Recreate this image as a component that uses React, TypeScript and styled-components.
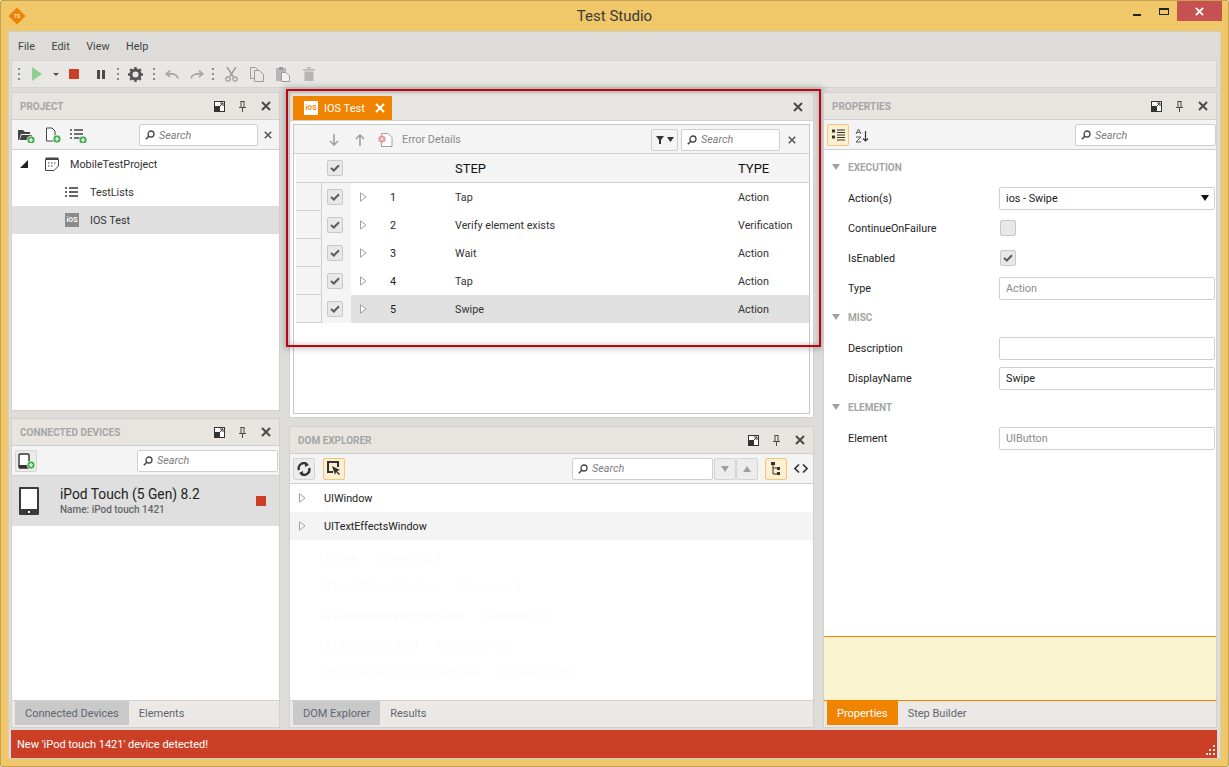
import * as React from "react"
import styled, { createGlobalStyle } from "styled-components"

const GlobalStyle = createGlobalStyle`
  html, body {
    margin: 0;
    padding: 0;
    background: #ffffff;
    overflow: hidden;
  }
  * {
    box-sizing: border-box;
  }
  body {
    font-family: Roboto, "Noto Sans", sans-serif;
    font-size: 10.8px;
    color: #222;
  }
`

/* ---------- small drawings ---------- */

const Dots = () => (
  <svg width="4" height="14" viewBox="0 0 4 14">
    <rect x="1" y="1" width="2" height="2" fill="#8a8a8a" />
    <rect x="1" y="6" width="2" height="2" fill="#8a8a8a" />
    <rect x="1" y="11" width="2" height="2" fill="#8a8a8a" />
  </svg>
)

const CloseX = ({ size = 10, color = "#4a4a4a", weight = 2 }: { size?: number; color?: string; weight?: number }) => (
  <svg width={size} height={size} viewBox="0 0 10 10">
    <path d="M1 1 L9 9 M9 1 L1 9" stroke={color} strokeWidth={weight} fill="none" />
  </svg>
)

const DockSvg = styled.svg`
  margin-right: -1px;
  margin-left: 1px;
`

const DockIcon = () => (
  <DockSvg width="11" height="11" viewBox="0 0 11 11">
    <rect x="0.5" y="0.5" width="10" height="10" fill="#fff" stroke="#333" />
    <rect x="1" y="5" width="5" height="5" fill="#333" />
    <path d="M5 6 L9 2 M6 2 H9 V5" stroke="#333" fill="none" />
  </DockSvg>
)

const PinIcon = () => (
  <svg width="9" height="11" viewBox="0 0 9 11">
    <path d="M2.5 0.5 H6.5 M3 0.5 V6 M6 0.5 V6 M1 6.5 H8 M4.5 6.5 V11" stroke="#4a4a4a" fill="none" />
  </svg>
)

const SearchGlass = () => (
  <svg width="10" height="10" viewBox="0 0 10 10">
    <circle cx="6" cy="4" r="3" stroke="#444" strokeWidth="1.3" fill="none" />
    <path d="M3.8 6.2 L0.8 9.2" stroke="#444" strokeWidth="1.5" />
  </svg>
)

const Check = ({ color = "#5c5c5c" }: { color?: string }) => (
  <svg width="10" height="8" viewBox="0 0 10 8">
    <path d="M1 4 L3.8 6.5 L9 1.2" stroke={color} strokeWidth="2" fill="none" />
  </svg>
)

const Disclosure = () => (
  <svg width="7" height="10" viewBox="0 0 7 10">
    <path d="M0.5 0.8 L6 5 L0.5 9.2 Z" fill="#fff" stroke="#a0a0a0" />
  </svg>
)

const DownGroup = () => (
  <svg width="8" height="6" viewBox="0 0 8 6">
    <path d="M0 0 H8 L4 6 Z" fill="#a0a0a0" />
  </svg>
)

const GreenPlus = () => (
  <g>
    <circle cx="13" cy="12" r="4" fill="#3fae4a" stroke="#fff" strokeWidth="0.6" />
    <path d="M13 10 V14 M11 12 H15" stroke="#fff" strokeWidth="1.2" />
  </g>
)

const BadgeBox = styled.span<{ $bg: string; $fg: string; $size: number }>`
  display: inline-flex;
  align-items: center;
  justify-content: center;
  width: ${(p) => p.$size}px;
  height: ${(p) => p.$size}px;
  background: ${(p) => p.$bg};
  color: ${(p) => p.$fg};
  font-size: 7px;
  font-weight: 700;
  flex: none;
`

const IosBadge = ({ $bg = "#8a8a8a", $fg = "#fff", size = 14 }: { $bg?: string; $fg?: string; size?: number }) => (
  <BadgeBox $bg={$bg} $fg={$fg} $size={size}>iOS</BadgeBox>
)

/* ---------- window chrome ---------- */

const Frame = styled.div`
  width: 1229px;
  height: 767px;
  background: #f0c769;
  border: 1px solid #c4a252;
  border-radius: 2px;
  display: flex;
  flex-direction: column;
  padding: 0 7px 7px;
`

const TitleBar = styled.div`
  height: 30px;
  flex: none;
  display: flex;
  align-items: center;
  position: relative;
`

const Logo = styled.span`
  margin-left: 3px;
  width: 12px;
  height: 12px;
  background: #ee8208;
  transform: rotate(45deg);
  display: inline-flex;
  align-items: center;
  justify-content: center;
  flex: none;
  margin-top: -1px;
`

const LogoText = styled.span`
  transform: rotate(-45deg);
  color: #ffe9c4;
  font-size: 5px;
  font-weight: 700;
`

const Title = styled.div`
  position: absolute;
  left: 0;
  right: 0;
  top: 6px;
  text-align: center;
  font-size: 15px;
  color: #3a3a3a;
`

const WindowButtons = styled.div`
  position: absolute;
  right: -1px;
  top: 0;
  display: flex;
  align-items: flex-start;
`

const MinButton = styled.span`
  width: 8px;
  height: 2px;
  background: #222;
  margin: 13px 18px 0 0;
`

const MaxButton = styled.span`
  width: 10px;
  height: 7px;
  border: 1px solid #222;
  border-top-width: 2px;
  margin: 7px 8px 0 0;
`

const CloseButton = styled.span`
  width: 45px;
  height: 20px;
  background: #c75050;
  display: flex;
  align-items: center;
  justify-content: center;
`

const Body = styled.div`
  flex: 1;
  min-height: 0;
  background: #dddcd8;
  border: 1px solid #cfcecb;
  display: flex;
  flex-direction: column;
`

const MenuBar = styled.div`
  height: 28px;
  flex: none;
  display: flex;
  align-items: center;
  padding-left: 9px;
  gap: 16.5px;
  color: #444;
`

const MainToolbar = styled.div`
  height: 28px;
  flex: none;
  margin: 0 3px 0 2px;
  background: #e8e7e3;
  border: 1px solid #d4d3cf;
  display: flex;
  align-items: center;
  padding-left: 5px;
`

const ToolSlot = styled.span<{ $w: number }>`
  width: ${(p) => p.$w}px;
  display: flex;
  align-items: center;
  justify-content: center;
  flex: none;
`

const Workspace = styled.div`
  flex: 1;
  min-height: 0;
  display: flex;
  gap: 9px;
  padding: 4px 0 2px 2px;
`

const Column = styled.div<{ $w: number }>`
  width: ${(p) => p.$w}px;
  flex: none;
  display: flex;
  flex-direction: column;
  position: relative;
`

const Panel = styled.section<{ $h?: number; $gap?: number }>`
  ${(p) => (p.$h ? `height: ${p.$h}px; flex: none;` : "flex: 1; min-height: 0;")}
  margin-top: ${(p) => p.$gap ?? 0}px;
  background: #fff;
  border: 1px solid #d2d1cd;
  display: flex;
  flex-direction: column;
`

const PanelHeader = styled.header`
  height: 27px;
  flex: none;
  background: #e8e5e1;
  border-bottom: 1px solid #d0d0d0;
  display: flex;
  align-items: center;
  padding: 0 8px 0 8px;
`

const PanelTitle = styled.span`
  flex: 1;
  font-size: 10px;
  font-weight: 700;
  color: #a5a5a5;
  text-transform: uppercase;
`

const HeaderIcons = styled.span`
  display: flex;
  align-items: center;
  gap: 14px;
`

const Strip = styled.div<{ $h?: number; $nudge?: boolean }>`
  height: ${(p) => p.$h ?? 29}px;
  flex: none;
  background: #f4f4f4;
  border-bottom: 1px solid #d0d0d0;
  display: flex;
  align-items: center;
  padding-top: ${(p) => (p.$nudge ? 1 : 0)}px;
`

const SearchBox = styled.div<{ $w: number }>`
  width: ${(p) => p.$w}px;
  height: 22px;
  flex: none;
  background: #fff;
  border: 1px solid #cfcfcf;
  border-radius: 2px;
  display: flex;
  align-items: center;
  gap: 4px;
  padding-left: 5px;
  font-style: italic;
  font-size: 10.8px;
  color: #7d7d7d;
`

const IconButton = styled.span<{ $active?: boolean; $w?: number; $outlined?: boolean }>`
  width: ${(p) => p.$w ?? 22}px;
  height: 22px;
  flex: none;
  display: inline-flex;
  align-items: center;
  justify-content: center;
  border-radius: 2px;
  background: ${(p) => (p.$active ? "#fdf0d0" : p.$outlined ? "#f4f4f4" : "#ececec")};
  border: 1px solid ${(p) => (p.$active ? "#f3c67a" : p.$outlined ? "#cfcfcf" : "#d4d4d4")};
`

const TabBar = styled.div<{ $accent?: boolean }>`
  height: 28px;
  flex: none;
  background: #ebe8e5;
  border-top: 1px solid ${(p) => (p.$accent ? "#f08300" : "#d0d0d0")};
  display: flex;
  align-items: flex-start;
  padding: 0 3px;
  margin: 0 -1px -1px;
  border-left: 1px solid #d2d1cd;
  border-right: 1px solid #d2d1cd;
  border-bottom: 1px solid #d2d1cd;
`

const Tab = styled.span<{ $state?: "on" | "orange" }>`
  height: 24px;
  display: flex;
  align-items: center;
  padding: 0 10px;
  font-size: 11px;
  color: ${(p) => (p.$state === "orange" ? "#fff" : "#5f6670")};
  background: ${(p) => (p.$state === "on" ? "#c9c9c9" : p.$state === "orange" ? "#f08300" : "transparent")};
`

/* ---------- project tree ---------- */

const TreeRow = styled.div<{ $selected?: boolean; $indent: number }>`
  height: 28px;
  flex: none;
  display: flex;
  align-items: center;
  padding-left: ${(p) => p.$indent}px;
  background: ${(p) => (p.$selected ? "#dfdfdf" : "transparent")};
  color: #333;
`

const TreeIcon = styled.span<{ $w: number }>`
  width: ${(p) => p.$w}px;
  flex: none;
  display: inline-flex;
  align-items: center;
`

/* ---------- device row ---------- */

const DeviceRow = styled.div`
  height: 50px;
  flex: none;
  background: #dfdfdf;
  display: flex;
  align-items: center;
  padding: 0 13px 0 7px;
`

const DeviceInfo = styled.div`
  flex: 1;
  margin-left: 21px;
  display: flex;
  flex-direction: column;
`

const DeviceName = styled.span`
  font-size: 13.8px;
  line-height: 18px;
  color: #222;
`

const DeviceSub = styled.span`
  font-size: 10px;
  line-height: 14px;
  font-weight: 500;
  color: #666;
`

const StopSquare = styled.span`
  width: 10px;
  height: 10px;
  background: #cc3f27;
`

/* ---------- test document ---------- */

const DocHeader = styled.header`
  height: 28px;
  flex: none;
  background: #e8e6e3;
  border-bottom: 1px solid #d0d0d0;
  display: flex;
  align-items: flex-end;
  justify-content: space-between;
  padding: 0 10px 0 3px;
`

const DocTab = styled.span`
  width: 99px;
  height: 24px;
  background: #f08300;
  color: #fff;
  display: flex;
  align-items: center;
  padding-left: 11px;
  gap: 6px;
`

const DocTabLabel = styled.span`
  width: 45px;
  font-size: 11px;
`

const DocClose = styled.span`
  align-self: center;
  display: flex;
`

const DocBody = styled.div`
  flex: 1;
  min-height: 0;
  margin: 3px;
  border: 1px solid #c9c9c9;
  display: flex;
  flex-direction: column;
`

const StepGrid = styled.div`
  display: grid;
  grid-template-columns: 26px 29px 104px 283px 1fr;
  height: 28px;
  flex: none;
  align-items: center;
`

const HeaderGrid = styled(StepGrid)`
  height: 29px;
  background: #f4f4f4;
  border-bottom: 1px solid #d0d0d0;
  font-size: 13px;
  color: #111;
  margin-left: 2px;
`

const StepRow = styled(StepGrid)`
  margin-left: 2px;
`

const Gutter = styled.span`
  height: 100%;
  background: #f4f4f4;
  border-right: 1px solid #d0d0d0;
  border-bottom: 1px solid #d0d0d0;
`

const BlankGutter = styled.span`
  height: 100%;
`

const CheckCell = styled.span`
  height: 100%;
  background: #f4f4f4;
  display: flex;
  align-items: center;
  padding-left: 5px;
`

const HeadCheckCell = styled(CheckCell)`
  background: transparent;
`

const CheckBox = styled.span`
  width: 16px;
  height: 16px;
  flex: none;
  background: #e8e8e8;
  border: 1px solid #c8c8c8;
  border-radius: 2px;
  display: inline-flex;
  align-items: center;
  justify-content: center;
`

const PropCheck = styled(CheckBox)`
  margin-left: 1px;
`

const NumCell = styled.span<{ $selected?: boolean }>`
  height: 100%;
  display: flex;
  align-items: center;
  background: ${(p) => (p.$selected ? "#e0e0e0" : "transparent")};
  gap: 23px;
  padding-left: 9px;
`

const TextCell = styled.span<{ $selected?: boolean }>`
  height: 100%;
  display: flex;
  align-items: center;
  background: ${(p) => (p.$selected ? "#e0e0e0" : "transparent")};
  color: #333;
`

const HeadCell = styled.span`
  display: flex;
  align-items: center;
`

const ErrorLabel = styled.span`
  color: #8a8a8a;
  margin-left: 5px;
`

const Spring = styled.span`
  flex: 1;
`

const Highlight = styled.div`
  position: absolute;
  left: -3px;
  top: -3px;
  width: 535px;
  height: 258px;
  border: 2px solid #bb0510;
  box-shadow: 0 0 6px 2px rgba(0, 0, 0, 0.22), inset 0 0 5px 1px rgba(0, 0, 0, 0.18);
  pointer-events: none;
`

/* ---------- dom explorer ---------- */

const DomRow = styled.div<{ $alt?: boolean }>`
  height: 28px;
  flex: none;
  display: flex;
  align-items: center;
  padding-left: 9px;
  gap: 18px;
  background: ${(p) => (p.$alt ? "#f4f4f4" : "transparent")};
  color: #222;
`

const GhostList = styled.div`
  padding-top: 3px;
`

const GhostRow = styled.div`
  height: 29px;
  display: flex;
  align-items: center;
  padding-left: 29px;
  gap: 19px;
  color: #fbfbfb;
  font-family: "Noto Sans", sans-serif;
  font-size: 12px;
`

const DomList = styled.div`
  flex: 1;
  min-height: 0;
  overflow: hidden;
  display: flex;
  flex-direction: column;
`

/* ---------- properties ---------- */

const PropList = styled.div`
  flex: 1;
  min-height: 0;
  display: flex;
  flex-direction: column;
  padding-top: 2px;
`

const SectionRow = styled.div`
  height: 30px;
  flex: none;
  display: flex;
  align-items: center;
  padding-left: 8px;
  gap: 8px;
  font-size: 10px;
  font-weight: 700;
  color: #a5a5a5;
`

const PropRow = styled.div`
  height: 30px;
  flex: none;
  display: grid;
  grid-template-columns: 151px 216px;
  align-items: center;
  padding: 2px 0 0 24px;
  color: #222;
`

const InputBox = styled.div<{ $muted?: boolean }>`
  height: 23px;
  background: #fff;
  border: 1px solid #cfcfcf;
  border-radius: 2px;
  display: flex;
  align-items: center;
  justify-content: space-between;
  padding: 0 5px 0 6px;
  color: ${(p) => (p.$muted ? "#8a8a8a" : "#222")};
`

const HelpArea = styled.div`
  height: 64px;
  flex: none;
  background: #faf3d0;
  border-top: 1px solid #f08300;
`

const StatusBar = styled.footer`
  height: 28px;
  flex: none;
  background: #cc3f27;
  color: #fff;
  display: flex;
  align-items: center;
  padding-left: 6px;
  margin: 0 3px 0 2px;
  font-size: 11px;
  position: relative;
`

const Grip = styled.svg`
  position: absolute;
  right: 1px;
  bottom: 1px;
`

/* ---------- data ---------- */

const STEPS = [
  { n: 1, name: "Tap", type: "Action" },
  { n: 2, name: "Verify element exists", type: "Verification" },
  { n: 3, name: "Wait", type: "Action" },
  { n: 4, name: "Tap", type: "Action" },
  { n: 5, name: "Swipe", type: "Action" },
]

const GHOSTS = [
  ["UIView", "Elements: 1"],
  ["UITextEffectsWindow", "Elements: 1"],
  ["UITableViewWrapperView", "Elements: 1"],
  ["UITableViewLabel", "Elements: 20"],
  ["UITableViewCellContentView", "Elements: 20"],
]

const PanelIcons = () => (
  <HeaderIcons>
    <DockIcon />
    <PinIcon />
    <CloseX />
  </HeaderIcons>
)

export default function App() {
  return (
    <>
      <GlobalStyle />
      <Frame>
        <TitleBar>
          <Logo>
            <LogoText>TS</LogoText>
          </Logo>
          <Title>Test Studio</Title>
          <WindowButtons>
            <MinButton />
            <MaxButton />
            <CloseButton>
              <CloseX size={9} color="#fff" />
            </CloseButton>
          </WindowButtons>
        </TitleBar>

        <Body>
          <MenuBar>
            <span>File</span>
            <span>Edit</span>
            <span>View</span>
            <span>Help</span>
          </MenuBar>

          <MainToolbar>
            <Dots />
            <ToolSlot $w={31}>
              <svg width="10" height="14" viewBox="0 0 10 14">
                <path d="M0 0 L10 7 L0 14 Z" fill="#8fd08f" />
              </svg>
            </ToolSlot>
            <ToolSlot $w={7}>
              <svg width="6" height="3" viewBox="0 0 6 3">
                <path d="M0 0 H6 L3 3 Z" fill="#555" />
              </svg>
            </ToolSlot>
            <ToolSlot $w={30}>
              <svg width="10" height="10" viewBox="0 0 10 10">
                <rect width="10" height="10" fill="#cc3f27" />
              </svg>
            </ToolSlot>
            <ToolSlot $w={24}>
              <svg width="9" height="9" viewBox="0 0 9 9">
                <rect x="0" width="3" height="9" fill="#4a4a4a" />
                <rect x="5" width="3" height="9" fill="#4a4a4a" />
              </svg>
            </ToolSlot>
            <ToolSlot $w={3} />
            <Dots />
            <ToolSlot $w={30}>
              <svg width="15" height="15" viewBox="0 0 15 15">
                <circle cx="7.5" cy="7.5" r="4.5" fill="none" stroke="#555" strokeWidth="3" />
                <path
                  d="M7.5 0 V3 M7.5 12 V15 M0 7.5 H3 M12 7.5 H15 M2.2 2.2 L4.3 4.3 M10.7 10.7 L12.8 12.8 M2.2 12.8 L4.3 10.7 M10.7 4.3 L12.8 2.2"
                  stroke="#555"
                  strokeWidth="2.4"
                />
              </svg>
            </ToolSlot>
            <ToolSlot $w={2} />
            <Dots />
            <ToolSlot $w={31}>
              <svg width="14" height="9" viewBox="0 0 14 9">
                <path d="M13 8.5 C12 4.5 9 3.5 2.5 3.8 M5 0.6 L1.2 3.8 L5 7" stroke="#a9a9a9" strokeWidth="1.8" fill="none" />
              </svg>
            </ToolSlot>
            <ToolSlot $w={19}>
              <svg width="14" height="9" viewBox="0 0 14 9">
                <path d="M1 8.5 C2 4.5 5 3.5 11.5 3.8 M9 0.6 L12.8 3.8 L9 7" stroke="#a9a9a9" strokeWidth="1.8" fill="none" />
              </svg>
            </ToolSlot>
            <ToolSlot $w={5} />
            <Dots />
            <ToolSlot $w={32}>
              <svg width="13" height="15" viewBox="0 0 13 15">
                <path d="M2 0 L8.2 9.5 M11 0 L4.8 9.5" stroke="#9a9a9a" strokeWidth="1.4" fill="none" />
                <circle cx="3" cy="12" r="2.2" fill="none" stroke="#9a9a9a" strokeWidth="1.2" />
                <circle cx="10" cy="12" r="2.2" fill="none" stroke="#9a9a9a" strokeWidth="1.2" />
              </svg>
            </ToolSlot>
            <ToolSlot $w={19}>
              <svg width="14" height="15" viewBox="0 0 14 15">
                <path d="M0.5 0.5 H5.5 L8.5 3.5 V11.5 H0.5 Z" fill="#e8e7e3" stroke="#9a9a9a" />
                <path d="M4.5 3.5 H9.5 L13.5 7.5 V14.5 H4.5 Z" fill="#e8e7e3" stroke="#9a9a9a" />
              </svg>
            </ToolSlot>
            <ToolSlot $w={34}>
              <svg width="14" height="15" viewBox="0 0 14 15">
                <rect x="0" y="1" width="10" height="13" fill="#b5b5b5" />
                <rect x="3" y="0" width="4" height="3" fill="#9a9a9a" />
                <path d="M5.5 5.5 H10 L13.5 9 V14.5 H5.5 Z" fill="#f2f2f0" stroke="#9a9a9a" />
              </svg>
            </ToolSlot>
            <ToolSlot $w={18}>
              <svg width="12" height="14" viewBox="0 0 12 14">
                <rect x="0" y="2" width="12" height="1.5" fill="#b5b5b5" />
                <rect x="4" y="0" width="4" height="1.5" fill="#b5b5b5" />
                <rect x="1.5" y="4.5" width="9" height="9.5" fill="#b5b5b5" />
              </svg>
            </ToolSlot>
          </MainToolbar>

          <Workspace>
            <Column $w={269}>
              <Panel $h={319}>
                <PanelHeader>
                  <PanelTitle>Project</PanelTitle>
                  <PanelIcons />
                </PanelHeader>
                <Strip $h={30} $nudge>
                  <ToolSlot $w={28}>
                    <svg width="17" height="15" viewBox="0 0 17 15">
                      <path d="M0 2 H5 L7 4 H12 V6 H3 L1 12 H0 Z" fill="#444" />
                      <path d="M3.5 7 H14 L12 12 H1.5 Z" fill="#444" />
                      <GreenPlus />
                    </svg>
                  </ToolSlot>
                  <ToolSlot $w={25}>
                    <svg width="17" height="16" viewBox="0 0 17 16">
                      <path d="M2.5 1 H8 L11 4 V14 H2.5 Z" fill="#fff" stroke="#444" />
                      <GreenPlus />
                    </svg>
                  </ToolSlot>
                  <ToolSlot $w={27}>
                    <svg width="17" height="15" viewBox="0 0 17 15">
                      <path d="M0 2 H2 M4 2 H13 M0 6 H2 M4 6 H13 M0 10 H2 M4 10 H10" stroke="#444" strokeWidth="1.6" />
                      <GreenPlus />
                    </svg>
                  </ToolSlot>
                  <ToolSlot $w={47} />
                  <SearchBox $w={119}>
                    <SearchGlass />
                    Search
                  </SearchBox>
                  <ToolSlot $w={20}>
                    <CloseX size={8} color="#555" />
                  </ToolSlot>
                </Strip>
                <TreeRow $indent={8}>
                  <TreeIcon $w={25}>
                    <svg width="8" height="8" viewBox="0 0 8 8">
                      <path d="M8 0 V8 H0 Z" fill="#222" />
                    </svg>
                  </TreeIcon>
                  <TreeIcon $w={25}>
                    <svg width="14" height="14" viewBox="0 0 14 14">
                      <path d="M0.5 2.5 H13.5 V9 L9 13.5 H0.5 Z" fill="#fff" stroke="#444" />
                      <rect x="0.5" y="0.5" width="13" height="2.5" fill="#444" />
                      <path d="M3 6 H4.5 M6 6 H7.5 M9 6 H10.5 M3 9 H4.5 M6 9 H7.5" stroke="#444" />
                    </svg>
                  </TreeIcon>
                  MobileTestProject
                </TreeRow>
                <TreeRow $indent={53}>
                  <TreeIcon $w={25}>
                    <svg width="13" height="10" viewBox="0 0 13 10">
                      <path d="M0 1 H2 M4 1 H13 M0 5 H2 M4 5 H13 M0 9 H2 M4 9 H13" stroke="#333" strokeWidth="1.7" />
                    </svg>
                  </TreeIcon>
                  TestLists
                </TreeRow>
                <TreeRow $indent={53} $selected>
                  <TreeIcon $w={25}>
                    <IosBadge />
                  </TreeIcon>
                  IOS Test
                </TreeRow>
              </Panel>

              <Panel $gap={7}>
                <PanelHeader>
                  <PanelTitle>Connected Devices</PanelTitle>
                  <PanelIcons />
                </PanelHeader>
                <Strip $h={30}>
                  <ToolSlot $w={3} />
                  <IconButton>
                    <svg width="17" height="16" viewBox="0 0 17 16">
                      <rect x="1" y="1" width="10" height="14" rx="1" fill="#fff" stroke="#333" strokeWidth="1.4" />
                      <rect x="1" y="12" width="10" height="3" fill="#333" />
                      <GreenPlus />
                    </svg>
                  </IconButton>
                  <ToolSlot $w={100} />
                  <SearchBox $w={141}>
                    <SearchGlass />
                    Search
                  </SearchBox>
                </Strip>
                <DeviceRow>
                  <svg width="20" height="28" viewBox="0 0 20 28">
                    <rect width="20" height="28" rx="1" fill="#3a3a3a" />
                    <rect x="2" y="2" width="16" height="20" fill="#fff" />
                    <rect x="9" y="24" width="2" height="2" fill="#fff" />
                  </svg>
                  <DeviceInfo>
                    <DeviceName>iPod Touch (5 Gen) 8.2</DeviceName>
                    <DeviceSub>Name: iPod touch 1421</DeviceSub>
                  </DeviceInfo>
                  <StopSquare />
                </DeviceRow>
                <DomList />
                <TabBar>
                  <Tab $state="on">Connected Devices</Tab>
                  <Tab>Elements</Tab>
                </TabBar>
              </Panel>
            </Column>

            <Column $w={525}>
              <Panel $h={326}>
                <DocHeader>
                  <DocTab>
                    <IosBadge $bg="#fff" $fg="#f08300" />
                    <DocTabLabel>IOS Test</DocTabLabel>
                    <CloseX size={10} color="#fff" />
                  </DocTab>
                  <DocClose>
                    <CloseX />
                  </DocClose>
                </DocHeader>
                <DocBody>
                  <Strip $nudge>
                    <ToolSlot $w={27} />
                    <ToolSlot $w={26}>
                      <svg width="10" height="12" viewBox="0 0 10 12">
                        <path d="M5 0 V11 M1 7 L5 11 L9 7" stroke="#a0a0a0" strokeWidth="1.6" fill="none" />
                      </svg>
                    </ToolSlot>
                    <ToolSlot $w={26}>
                      <svg width="10" height="12" viewBox="0 0 10 12">
                        <path d="M5 12 V1 M1 5 L5 1 L9 5" stroke="#a0a0a0" strokeWidth="1.6" fill="none" />
                      </svg>
                    </ToolSlot>
                    <ToolSlot $w={24}>
                      <svg width="15" height="14" viewBox="0 0 15 14">
                        <path d="M3.5 0.5 H10 L14 4.5 V13.5 H3.5 Z" fill="#fff" stroke="#a0a0a0" />
                        <circle cx="4" cy="6" r="3.6" fill="#e89a9a" />
                        <path d="M2.6 4.6 L5.4 7.4 M5.4 4.6 L2.6 7.4" stroke="#fff" />
                      </svg>
                    </ToolSlot>
                    <ErrorLabel>Error Details</ErrorLabel>
                    <Spring />
                    <IconButton $w={27} $outlined>
                      <svg width="18" height="8" viewBox="0 0 18 8">
                        <path d="M0 0 H8 L5 4 V8 H3 V4 Z M11 1 H18 L14.5 6 Z" fill="#333" />
                      </svg>
                    </IconButton>
                    <ToolSlot $w={3} />
                    <SearchBox $w={99}>
                      <SearchGlass />
                      Search
                    </SearchBox>
                    <ToolSlot $w={23}>
                      <CloseX size={8} color="#555" />
                    </ToolSlot>
                    <ToolSlot $w={6} />
                  </Strip>
                  <HeaderGrid>
                    <BlankGutter />
                    <HeadCheckCell>
                      <CheckBox>
                        <Check />
                      </CheckBox>
                    </HeadCheckCell>
                    <span />
                    <HeadCell>STEP</HeadCell>
                    <HeadCell>TYPE</HeadCell>
                  </HeaderGrid>
                  {STEPS.map((s) => (
                    <StepRow key={s.n}>
                      <Gutter />
                      <CheckCell>
                        <CheckBox>
                          <Check />
                        </CheckBox>
                      </CheckCell>
                      <NumCell $selected={s.n === 5}>
                        <Disclosure />
                        {s.n}
                      </NumCell>
                      <TextCell $selected={s.n === 5}>{s.name}</TextCell>
                      <TextCell $selected={s.n === 5}>{s.type}</TextCell>
                    </StepRow>
                  ))}
                </DocBody>
              </Panel>

              <Highlight />

              <Panel $gap={8}>
                <PanelHeader>
                  <PanelTitle>DOM Explorer</PanelTitle>
                  <PanelIcons />
                </PanelHeader>
                <Strip $h={30}>
                  <ToolSlot $w={3} />
                  <IconButton>
                    <svg width="14" height="14" viewBox="0 0 14 14">
                      <path d="M2 8 A5 5 0 0 1 10 2.5 M12 6 A5 5 0 0 1 4 11.5" fill="none" stroke="#333" strokeWidth="2.4" />
                      <path d="M8 0 L12 3 L8 5 Z M6 14 L2 11 L6 9 Z" fill="#333" />
                    </svg>
                  </IconButton>
                  <ToolSlot $w={8} />
                  <IconButton $active>
                    <svg width="15" height="15" viewBox="0 0 15 15">
                      <path d="M6 11 H1 V1 H11 V6" fill="none" stroke="#333" strokeWidth="2" />
                      <path d="M5 5 L13 9 L10 10 L13 13 L12 14 L9 11 L8 14 Z" fill="#333" />
                    </svg>
                  </IconButton>
                  <ToolSlot $w={227} />
                  <SearchBox $w={141}>
                    <SearchGlass />
                    Search
                  </SearchBox>
                  <ToolSlot $w={1} />
                  <IconButton>
                    <DownGroup />
                  </IconButton>
                  <IconButton>
                    <svg width="8" height="6" viewBox="0 0 8 6">
                      <path d="M0 6 H8 L4 0 Z" fill="#a0a0a0" />
                    </svg>
                  </IconButton>
                  <ToolSlot $w={7} />
                  <IconButton $active>
                    <svg width="10" height="14" viewBox="0 0 10 14">
                      <path d="M2 1 V12 H6 M2 6 H6" stroke="#333" fill="none" />
                      <rect x="0" y="0" width="4" height="3" fill="#333" />
                      <rect x="6" y="5" width="3" height="3" fill="#333" />
                      <rect x="6" y="10" width="3" height="3" fill="#333" />
                    </svg>
                  </IconButton>
                  <ToolSlot $w={3} />
                  <ToolSlot $w={22}>
                    <svg width="14" height="9" viewBox="0 0 14 9">
                      <path d="M5 0.5 L1 4.5 L5 8.5 M9 0.5 L13 4.5 L9 8.5" stroke="#333" strokeWidth="1.6" fill="none" />
                    </svg>
                  </ToolSlot>
                </Strip>
                <DomList>
                  <DomRow>
                    <Disclosure />
                    UIWindow
                  </DomRow>
                  <DomRow $alt>
                    <Disclosure />
                    UITextEffectsWindow
                  </DomRow>
                  <GhostList>
                    {GHOSTS.map(([name, count]) => (
                      <GhostRow key={name}>
                        <span>{name}</span>
                        <span>{count}</span>
                      </GhostRow>
                    ))}
                  </GhostList>
                </DomList>
                <TabBar>
                  <Tab $state="on">DOM Explorer</Tab>
                  <Tab>Results</Tab>
                </TabBar>
              </Panel>
            </Column>

            <Column $w={394}>
              <Panel>
                <PanelHeader>
                  <PanelTitle>Properties</PanelTitle>
                  <PanelIcons />
                </PanelHeader>
                <Strip $h={30} $nudge>
                  <ToolSlot $w={3} />
                  <IconButton $active>
                    <svg width="13" height="12" viewBox="0 0 13 12">
                      <path d="M0 2 H3 M0 8 H3" stroke="#333" strokeWidth="3" />
                      <path d="M5 1 H13 M5 3.5 H13 M5 6 H13 M5 8.5 H13 M5 11 H13" stroke="#333" />
                    </svg>
                  </IconButton>
                  <ToolSlot $w={26}>
                    <svg width="14" height="15" viewBox="0 0 14 15">
                      <path d="M1 6 L3.5 1 L6 6 M1.8 4.4 H5.2 M1 9 H6 L1 14 H6" stroke="#555" fill="none" />
                      <path d="M10.5 3 V13 M8 10.5 L10.5 13 L13 10.5" stroke="#333" strokeWidth="1.2" fill="none" />
                    </svg>
                  </ToolSlot>
                  <ToolSlot $w={200} />
                  <SearchBox $w={141}>
                    <SearchGlass />
                    Search
                  </SearchBox>
                </Strip>
                <PropList>
                  <SectionRow>
                    <DownGroup />
                    EXECUTION
                  </SectionRow>
                  <PropRow>
                    <span>Action(s)</span>
                    <InputBox>
                      <span>ios - Swipe</span>
                      <svg width="8" height="6" viewBox="0 0 8 6">
                        <path d="M0 0 H8 L4 6 Z" fill="#111" />
                      </svg>
                    </InputBox>
                  </PropRow>
                  <PropRow>
                    <span>ContinueOnFailure</span>
                    <PropCheck />
                  </PropRow>
                  <PropRow>
                    <span>IsEnabled</span>
                    <PropCheck>
                      <Check />
                    </PropCheck>
                  </PropRow>
                  <PropRow>
                    <span>Type</span>
                    <InputBox $muted>Action</InputBox>
                  </PropRow>
                  <SectionRow>
                    <DownGroup />
                    MISC
                  </SectionRow>
                  <PropRow>
                    <span>Description</span>
                    <InputBox />
                  </PropRow>
                  <PropRow>
                    <span>DisplayName</span>
                    <InputBox>Swipe</InputBox>
                  </PropRow>
                  <SectionRow>
                    <DownGroup />
                    ELEMENT
                  </SectionRow>
                  <PropRow>
                    <span>Element</span>
                    <InputBox $muted>UIButton</InputBox>
                  </PropRow>
                </PropList>
                <HelpArea />
                <TabBar $accent>
                  <Tab $state="orange">Properties</Tab>
                  <Tab>Step Builder</Tab>
                </TabBar>
              </Panel>
            </Column>
          </Workspace>

          <StatusBar>
            New 'iPod touch 1421' device detected!
            <Grip width="10" height="12" viewBox="0 0 10 12">
              <path d="M7 0 h2 v2 h-2 Z M7 4 h2 v2 h-2 Z M3 4 h2 v2 h-2 Z M7 8 h2 v2 h-2 Z M3 8 h2 v2 h-2 Z M0 8 h2 v2 h-2 Z" fill="#f2e6e0" />
            </Grip>
          </StatusBar>
        </Body>
      </Frame>
    </>
  )
}
